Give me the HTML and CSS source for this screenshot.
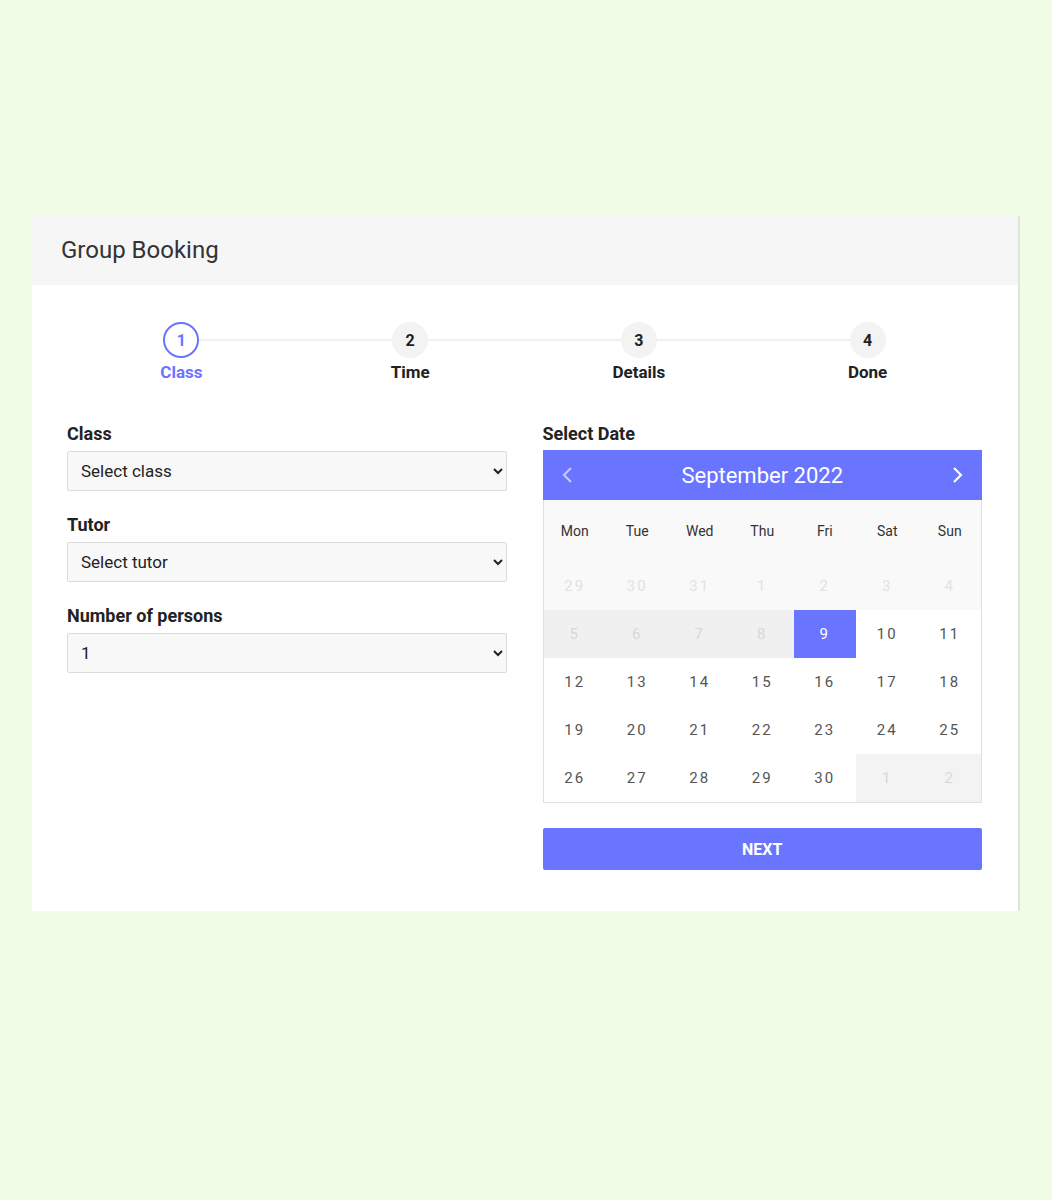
FILE: index.html
```html
<!DOCTYPE html>
<html>
<head>
	<title>Group Booking</title>
	<meta name="viewport" content="width=device-width, initial-scale=1.0">
	<link rel="stylesheet" href="styles.css">
</head>
<body>
	<div class="page">
		<div class="card">
			<div class="card-header">Group Booking</div>
			<div class="card-body">
				<div class="steps">
					<div class="step active"><span class="num">1</span><span class="name">Class</span></div>
					<div class="step"><span class="num">2</span><span class="name">Time</span></div>
					<div class="step"><span class="num">3</span><span class="name">Details</span></div>
					<div class="step last"><span class="num">4</span><span class="name">Done</span></div>
				</div>
				<div class="form">
					<div class="col">
						<div class="field">
							<label>Class</label>
							<select><option>Select class</option></select>
						</div>
						<div class="field">
							<label>Tutor</label>
							<select><option>Select tutor</option></select>
						</div>
						<div class="field">
							<label>Number of persons</label>
							<select><option>1</option><option>2</option><option>3</option></select>
						</div>
					</div>
					<div class="col">
						<label>Select Date</label>
						<div class="calendar">
							<div class="cal-head">
								<svg class="prev" width="14" height="20" viewBox="0 0 14 20"><path d="M10 3 L3 10 L10 17" fill="none" stroke="#fff" stroke-width="2.2"/></svg>
								<span>September 2022</span>
								<svg class="next" width="14" height="20" viewBox="0 0 14 20"><path d="M4 3 L11 10 L4 17" fill="none" stroke="#fff" stroke-width="2.2"/></svg>
							</div>
							<div class="weekdays">
								<span>Mon</span><span>Tue</span><span>Wed</span><span>Thu</span><span>Fri</span><span>Sat</span><span>Sun</span>
							</div>
							<div class="days">
								<span class="off first">29</span><span class="off first">30</span><span class="off first">31</span><span class="off first">1</span><span class="off first">2</span><span class="off first">3</span><span class="off first">4</span>
								<span class="off past">5</span><span class="off past">6</span><span class="off past">7</span><span class="off past">8</span><span class="sel">9</span><span>10</span><span>11</span>
								<span>12</span><span>13</span><span>14</span><span>15</span><span>16</span><span>17</span><span>18</span>
								<span>19</span><span>20</span><span>21</span><span>22</span><span>23</span><span>24</span><span>25</span>
								<span>26</span><span>27</span><span>28</span><span>29</span><span>30</span><span class="off after">1</span><span class="off after">2</span>
							</div>
						</div>
						<button class="next-btn">NEXT</button>
					</div>
				</div>
			</div>
		</div>
	</div>
</body>
</html>
```

FILE: styles.css
```css
body, html {
	margin: 0;
	font-family: Roboto, "Liberation Sans", sans-serif;
	background-color: #f1fde7;
	color: #222;
}
.page {
	padding: 216px 32px 0 32px;
}
.card {
	width: 986px;
	background: white;
	border-right: 2px solid #e2e2e2;
}
.card-header {
	background: #f6f6f6;
	height: 69px;
	line-height: 68px;
	padding-left: 29px;
	font-size: 24px;
	color: #333;
}
.card-body {
	padding: 37px 36px 41px 35px;
}
.steps {
	display: grid;
	grid-template-columns: repeat(4, 1fr);
	margin-bottom: 41px;
}
.step {
	position: relative;
	display: flex;
	flex-direction: column;
	align-items: center;
}
.step::after {
	content: "";
	position: absolute;
	top: 17px;
	left: 50%;
	width: 100%;
	height: 2px;
	background: #f0f0f0;
}
.step.last::after { display: none; }
.step .num {
	position: relative;
	z-index: 1;
	width: 36px;
	height: 36px;
	line-height: 37px;
	border-radius: 50%;
	background: #f3f3f3;
	text-align: center;
	font-weight: bold;
	font-size: 16px;
	box-sizing: border-box;
}
.step .name {
	margin-top: 4px;
	font-weight: bold;
	font-size: 17px;
	line-height: 20px;
}
.step.active .num {
	background: white;
	border: 2px solid #6a75ff;
	line-height: 33px;
	color: #6a75ff;
}
.step.active .name { color: #6a75ff; }
.form {
	display: grid;
	grid-template-columns: 1fr 1fr;
	column-gap: 36px;
}
label {
	display: block;
	font-weight: bold;
	font-size: 18px;
	line-height: 22px;
	margin-bottom: 6px;
	color: #222;
}
.field { margin-bottom: 23px; }
select {
	display: block;
	width: 100%;
	height: 40px;
	background: #f8f8f8;
	border: 1px solid #dcdcdc;
	border-radius: 2px;
	padding: 0 8px 0 9px;
	font-family: Roboto, "Liberation Sans", sans-serif;
	font-size: 17px;
	color: #222;
}
.calendar {
	margin-top: -1px;
	border: 1px solid #e0e0e0;
	border-top: none;
}
.cal-head {
	background: #6a75ff;
	height: 50px;
	margin: 0 -1px;
	display: flex;
	align-items: center;
	justify-content: space-between;
	padding: 0 18px;
	color: white;
	font-size: 22px;
}
.cal-head .prev { opacity: 0.6; }
.weekdays, .days {
	display: grid;
	grid-template-columns: repeat(7, 1fr);
	text-align: center;
}
.weekdays {
	background: #f9f9f9;
	height: 62px;
	line-height: 62px;
	font-size: 14px;
	color: #333;
}
.days span {
	height: 48px;
	line-height: 48px;
	font-size: 15px;
	letter-spacing: 2px;
	color: #555;
}
.days .off { color: #d8d8d8; }
.days .first { background: #f9f9f9; color: #e2e2e2; }
.days .past { background: #f0f0f0; }
.days .after { background: #f3f3f3; }
.days .sel {
	background: #6a75ff;
	color: white;
}
.next-btn {
	display: block;
	width: 100%;
	height: 42px;
	margin-top: 25px;
	border: none;
	border-radius: 2px;
	background: #6a75ff;
	color: white;
	font-family: Roboto, "Liberation Sans", sans-serif;
	font-weight: bold;
	font-size: 16px;
}
```
